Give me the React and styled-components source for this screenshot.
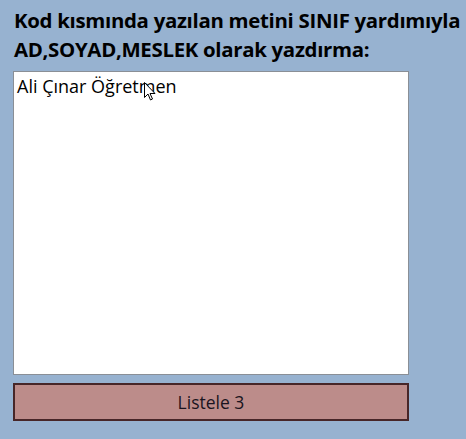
import React from 'react'
import styled, { createGlobalStyle } from 'styled-components'

const GlobalStyle = createGlobalStyle`
  html, body {
    margin: 0;
    padding: 0;
    background: #97b2d0;
  }
  body {
    font-family: "Open Sans", "Noto Sans", sans-serif;
  }
`

const Page = styled.div`
  width: 466px;
  height: 439px;
  padding: 6px 0 0 13px;
  box-sizing: border-box;
  display: flex;
  flex-direction: column;
`

const Title = styled.h3`
  margin: 0 0 7px 1px;
  font-size: 20.4px;
  line-height: 29px;
  font-weight: 700;
  letter-spacing: -0.3px;
  color: #000;
  white-space: nowrap;
`

const Field = styled.div`
  position: relative;
  width: 396px;
  height: 304px;
`

const TextArea = styled.textarea`
  width: 100%;
  height: 100%;
  box-sizing: border-box;
  margin: 0;
  padding: 3px 3px;
  border: 1px solid #8a8f96;
  background: #fff;
  font-family: "Open Sans", "Noto Sans", sans-serif;
  font-size: 18px;
  line-height: 22px;
  color: #000;
  resize: none;
  outline: none;
`

const Cursor = styled.svg`
  position: absolute;
  left: 131px;
  top: 11px;
  pointer-events: none;
`

const Button = styled.button`
  margin-top: 8px;
  width: 396px;
  height: 38px;
  box-sizing: border-box;
  border: 2px solid #472628;
  background: #bc8c8a;
  font-family: "Open Sans", "Noto Sans", sans-serif;
  font-size: 17.5px;
  color: #1a1420;
  cursor: pointer;
`

export default function App() {
  return (
    <>
      <GlobalStyle />
      <Page>
        <Title>
          Kod kısmında yazılan metini SINIF yardımıyla
          <br />
          AD,SOYAD,MESLEK olarak yazdırma:
        </Title>
        <Field>
          <TextArea defaultValue="Ali Çınar Öğretmen" />
          <Cursor width="12" height="19" viewBox="0 0 12 19">
            <path d="M0.5 0.5 L0.5 15.5 L4 12 L6.5 18 L8.5 17 L6 11.5 L11 11.5 Z" fill="#fff" stroke="#000" strokeWidth="1" />
          </Cursor>
        </Field>
        <Button>Listele 3</Button>
      </Page>
    </>
  )
}
